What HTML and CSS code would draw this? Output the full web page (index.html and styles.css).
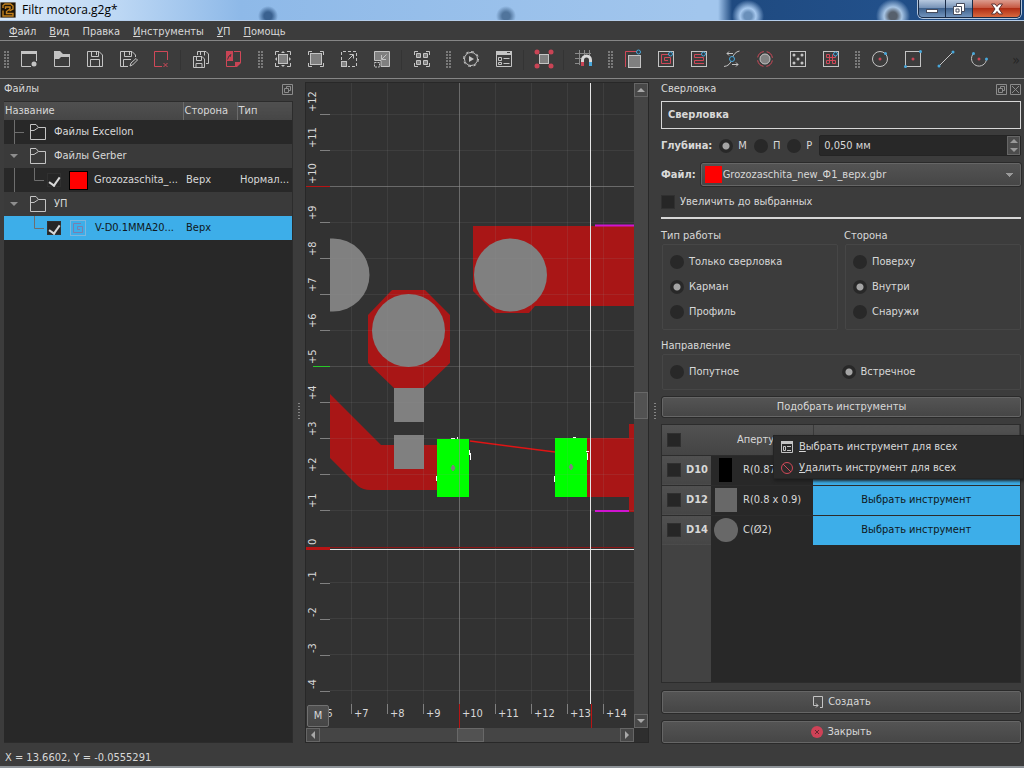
FILE: index.html
```html
<!DOCTYPE html>
<html lang="ru">
<head>
    <meta charset="UTF-8">
    <meta name="viewport" content="width=device-width, initial-scale=1.0">
    <title>Filtr motora.g2g*</title>
    <link rel="stylesheet" href="styles.css">
</head>
<body>
    <header class="titlebar">
        <svg class="app-icon" width="16" height="16" viewBox="0 0 16 16">
            <rect width="16" height="16" fill="#1d1408"/>
            <path d="M3 6V3.500L5 2H10.500L13 4V7L9.500 9M3 8.500V14H13V11.500H6.500V9.500L10 7V5H5.500V7" fill="none" stroke="#c4811c" stroke-width="1.400"/>
        </svg>
        <h1>Filtr motora.g2g*</h1>
        <div class="window-buttons">
            <button aria-label="Свернуть"><svg width="14" height="12" viewBox="0 0 14 12"><rect x="1.500" y="6.500" width="11" height="3" fill="#fff" stroke="#454b5c"/></svg></button>
            <button aria-label="Развернуть"><svg width="14" height="12" viewBox="0 0 14 12"><path d="M4.500 .5H12.500V8.500H9.500V11.500H1.500V3.500H4.500Z" fill="#fff" stroke="#454b5c"/><path d="M4.500 3.500H9.500V8.500M4 6H7V9H4Z" fill="none" stroke="#454b5c"/></svg></button>
            <button class="close" aria-label="Закрыть окно"><svg width="14" height="12" viewBox="0 0 14 12"><path d="M1.500 1H5L7 3.500 9 1H12.500L9 6 12.500 11H9L7 8.500 5 11H1.500L5 6Z" fill="#fff" stroke="#5b3030"/></svg></button>
        </div>
    </header>

    <nav class="menubar">
        <a href="#"><u>Ф</u>айл</a>
        <a href="#"><u>В</u>ид</a>
        <a href="#">Правка</a>
        <a href="#"><u>И</u>нструменты</a>
        <a href="#"><u>У</u>П</a>
        <a href="#"><u>П</u>омощь</a>
    </nav>

    <div class="toolbar">
        <div class="tool-group">
            <span class="handle"></span>
            <button aria-label="Новый"><svg viewBox="-3 -2 21 21"><path class="fill" d="M0 0H16V3H0Z"/><path d="M.5 2V15.500H10M15.500 2V10"/><circle class="fill" cx="13" cy="13" r="2.500"/></svg></button>
            <button aria-label="Открыть"><svg viewBox="-3 -2 21 21"><path class="fill" d="M0 0H6L9 3H16V6H7L5 8H0Z"/><path d="M.5 3V15.500H15.500V4"/></svg></button>
            <button aria-label="Сохранить"><svg viewBox="-3 -2 21 21"><path d="M.5 .5H12L15.500 4V15.500H.5ZM4.500 .5V5.500H11.500V.5M9.500 1V4M3.500 15V8.500H12.500V15"/></svg></button>
            <button aria-label="Сохранить как"><svg viewBox="-3 -2 21 21"><path d="M8 15.500H.5V.5H12L15.500 4V6M4.500 .5V5.500H11.500V.5M9.500 1V4M3.500 15V8.500H11M10 15L11 12 16 7.500 17.500 9 12.500 14Z"/></svg></button>
            <button aria-label="Закрыть файл"><svg viewBox="-3 -2 21 21"><path class="red" d="M9 15.500H1.500V.5H14.500V9M10.500 12L14.500 16M14.500 12L10.500 16"/></svg></button>
            <span class="sep"></span>
            <button aria-label="Сохранить все"><svg viewBox="-3 -2 21 21"><path d="M.5 5.500H9L11.500 8V16.500H.5ZM3.500 5.500V9.500H8.500V5.500M3 16V12.500H9V16M4.500 4V.5H13L15.500 3V12.500H13M7.500 1V4M11.500 1V4.500"/></svg></button>
            <button aria-label="Экспорт PDF"><svg viewBox="-3 -2 21 21"><path class="red" d="M8 .5H14.500V11M.5 10V15.500H9"/><path class="redfill" d="M0 0H7V10H0ZM15 11V12L11 16H9V11Z"/><path d="M1.500 8.500L3 5 5 3.500 4 6" stroke="#3c3c3c"/></svg></button>
        </div>
        <div class="tool-group">
            <span class="handle"></span>
            <button aria-label="Вписать"><svg viewBox="-3 -2 21 21"><path d="M.5 4V.5H4M12 .5H15.500V4M15.500 12V15.500H12M4 15.500H.5V12"/><rect class="box" x="3.500" y="3.500" width="9" height="9"/><path class="fill" d="M8 0L10 2H6ZM8 16L6 14H10ZM0 8L2 6V10ZM16 8L14 10V6Z"/></svg></button>
            <button aria-label="Масштаб 100%"><svg viewBox="-3 -2 21 21"><path d="M.5 4V.5H4M12 .5H15.500V4M15.500 12V15.500H12M4 15.500H.5V12"/><rect class="box" x="2.500" y="2.500" width="11" height="11"/></svg></button>
            <button aria-label="Увеличить"><svg viewBox="-3 -2 21 21"><path d="M.5 9V.5H15.500V15.500H7" stroke-dasharray="3 2"/><rect class="box" x=".5" y="10.500" width="5" height="5"/><path d="M7.500 8.500L12 4M8.500 3.500H12.500V7.500"/></svg></button>
            <button aria-label="Уменьшить"><svg viewBox="-3 -2 21 21"><path class="box" d="M.5 .5H15.500V15.500H7V9.500H.5Z"/><path d="M12.500 3.500L8 8M7.500 4V8.500H12"/><path d="M.5 11.500H5.500V16H.5Z" stroke-dasharray="2 1"/></svg></button>
            <span class="sep"></span>
            <button aria-label="Выбрать всё"><svg viewBox="-3 -2 21 21"><path d="M.5 4V.5H4M12 .5H15.500V4M15.500 12V15.500H12M4 15.500H.5V12"/><path class="box" d="M2.500 2.500H6.500V6.500H2.500ZM9.500 2.500H13.500V6.500H9.500ZM2.500 9.500H6.500V13.500H2.500ZM9.500 9.500H13.500V13.500H9.500Z"/></svg></button>
        </div>
        <div class="tool-group">
            <span class="handle"></span>
            <button aria-label="Запуск"><svg viewBox="-3 -2 21 21"><circle cx="8" cy="8" r="6.500"/><circle cx="8" cy="8" r="7.500" stroke-dasharray="3 2.890"/><path class="fill" d="M6 5L11 8 6 11Z"/></svg></button>
            <button aria-label="База инструментов"><svg viewBox="-3 -2 21 21"><path d="M.5 .5H15.500V15.500H.5ZM2.500 6.500H5.500V9.500H2.500ZM2.500 11.500H5.500V13.500H2.500ZM7.500 7.500H13.500M7.500 12.500H13.500"/><path class="fill" d="M0 0H16V4H0Z"/><path d="M11 1.500H14" stroke="#3c3c3c"/></svg></button>
            <span class="sep"></span>
            <button aria-label="Метки"><svg viewBox="-3 -2 21 21"><path class="red" d="M1 1L15 15M15 1L1 15"/><rect class="box" x="3.500" y="3.500" width="9" height="9"/><g class="redfill"><circle cx="1" cy="1" r="2.500"/><circle cx="15" cy="1" r="2.500"/><circle cx="1" cy="15" r="2.500"/><circle cx="15" cy="15" r="2.500"/></g></svg></button>
            <span class="sep"></span>
            <button aria-label="Привязка"><svg viewBox="-3 -2 21 21"><path d="M3.500 -1V14M8.500 -1V5M13.500 -1V5M-1 2.500H15M-1 7.500H6M-1 12.500H4" stroke="#8a8a8a"/><path d="M6.500 12V9A4 4 0 0 1 14.500 9V12" stroke="#d8d8d8" stroke-width="3"/><path class="redfill" d="M5 11H8V15H5Z"/><path d="M13 11H16V15H13Z" fill="#48a8dc" stroke="none"/></svg></button>
        </div>
        <div class="tool-group">
            <span class="handle"></span>
            <button aria-label="Профиль"><svg viewBox="-3 -2 21 21"><path class="red" d="M.5 16V.5H13"/><rect class="box" x="3.500" y="4.500" width="12" height="12"/><circle class="blue" cx="13.500" cy="1" r="2"/></svg></button>
            <button aria-label="Карман"><svg viewBox="-3 -2 21 21"><rect x=".5" y=".5" width="15" height="15"/><path class="red" d="M12 3.500H3.500V12.500H12.500V6.500H6.500V9.500H10"/><circle class="blue" cx="12.500" cy="3" r="2"/></svg></button>
            <button aria-label="Растр"><svg viewBox="-3 -2 21 21"><rect x=".5" y=".5" width="15" height="15"/><path class="red" d="M11 3.500H3.500V6.500H12.500V9.500H3.500V12.500H13"/><circle class="blue" cx="12.500" cy="3" r="2"/></svg></button>
            <button aria-label="Гравировка"><svg viewBox="-3 -2 21 21"><path d="M0 15.500Q6 15 8 8T15.500 0M3 2.500H9M5 .5L3 2.500 5 4.500M8 13.500H14M12 11.500L14 13.500 12 15.500"/><circle class="blue" cx="8" cy="8" r="2.500"/></svg></button>
            <button aria-label="Сверловка"><svg viewBox="-3 -2 21 21"><circle class="box" cx="8" cy="8" r="5"/><circle class="red" cx="8" cy="8" r="7.500" stroke-dasharray="8.780 3" stroke-dashoffset="-1.500"/></svg></button>
            <button aria-label="Отверстия"><svg viewBox="-3 -2 21 21"><rect x=".5" y=".5" width="15" height="15"/><g class="fill"><circle cx="4" cy="4" r="1.500"/><circle cx="12" cy="4" r="1.500"/><circle cx="8" cy="8" r="1.500"/><circle cx="4" cy="12" r="1.500"/><circle cx="12" cy="12" r="1.500"/></g></svg></button>
            <button aria-label="Перекрестия"><svg viewBox="-3 -2 21 21"><rect x=".5" y=".5" width="15" height="15"/><path class="red" d="M6.500 3.500H3.500V6.500H12.500V3.500H9.500V12.500H12.500V9.500H3.500V12.500H6.500Z"/><circle class="blue" cx="12.500" cy="3" r="2"/></svg></button>
        </div>
        <div class="tool-group">
            <span class="handle"></span>
            <button aria-label="Окружность"><svg viewBox="-3 -2 21 21"><circle cx="8" cy="8" r="7.500"/><circle class="redfill" cx="8" cy="8" r="1.500"/><circle class="bluefill" cx="13.500" cy="2.500" r="1.500"/></svg></button>
            <button aria-label="Прямоугольник"><svg viewBox="-3 -2 21 21"><rect x=".5" y=".5" width="15" height="15"/><circle class="redfill" cx="8" cy="8" r="1.500"/><circle class="bluefill" cx="15.500" cy=".5" r="1.500"/><circle class="bluefill" cx=".5" cy="15.500" r="1.500"/></svg></button>
            <button aria-label="Линия"><svg viewBox="-3 -2 21 21"><path d="M1 15L15 1"/><circle class="bluefill" cx="15" cy="1" r="1.500"/><circle class="bluefill" cx="1" cy="15" r="1.500"/></svg></button>
            <button aria-label="Дуга"><svg viewBox="-3 -2 21 21"><path d="M2.500 2.500A7.500 7.500 0 1 0 15.500 8"/><circle class="redfill" cx="8" cy="8" r="1.500"/><circle class="bluefill" cx="2.500" cy="2.500" r="1.500"/><circle class="bluefill" cx="15.500" cy="8" r="1.500"/></svg></button>
        </div>
        <button class="more" aria-label="Ещё">»</button>
    </div>

    <main class="workspace">
        <section class="dock files">
            <div class="dock-title">
                <h2>Файлы</h2>
                <button aria-label="Открепить"><svg viewBox="0 0 11 11"><path d="M.5 .5H10.500V10.500H.5ZM4.500 4.500V2.500H8.500V6.500H6.500M2.500 4.500H6.500V8.500H2.500Z"/></svg></button>
            </div>
            <div class="tree">
                <table>
                    <colgroup><col><col class="col-side"><col class="col-type"></colgroup>
                    <thead><tr><th>Название</th><th>Сторона</th><th>Тип</th></tr></thead>
                    <tbody>
                        <tr>
                            <td><div class="node">
                                <svg class="branch" viewBox="0 0 20 24"><path d="M10.500 0V24M11 12.500H20"/></svg>
                                <svg class="folder" viewBox="0 0 16 16"><path d="M.5 15.500V.5H6L8.500 3.500H15.500V15.500ZM.5 6.500H4L8.500 3.500"/></svg>
                                <span>Файлы Excellon</span></div></td>
                            <td></td><td></td>
                        </tr>
                        <tr class="alt">
                            <td><div class="node">
                                <svg class="branch" viewBox="0 0 20 24"><path class="arrow" d="M6 10H14L10 14Z"/></svg>
                                <svg class="folder" viewBox="0 0 16 16"><path d="M.5 15.500V.5H6L8.500 3.500H15.500V15.500ZM.5 6.500H4L8.500 3.500"/></svg>
                                <span>Файлы Gerber</span></div></td>
                            <td></td><td></td>
                        </tr>
                        <tr>
                            <td><div class="node">
                                <svg class="branch" viewBox="0 0 20 24"><path d="M10.500 0V24"/></svg>
                                <svg class="branch" viewBox="0 0 20 24"><path d="M10.500 0V12.500H20"/></svg>
                                <input type="checkbox" checked aria-label="Показать Grozozaschita">
                                <i class="swatch"></i>
                                <span>Grozozaschita_...</span></div></td>
                            <td>Верх</td><td>Нормал...</td>
                        </tr>
                        <tr class="alt">
                            <td><div class="node">
                                <svg class="branch" viewBox="0 0 20 24"><path class="arrow" d="M6 10H14L10 14Z"/></svg>
                                <svg class="folder" viewBox="0 0 16 16"><path d="M.5 15.500V.5H6L8.500 3.500H15.500V15.500ZM.5 6.500H4L8.500 3.500"/></svg>
                                <span>УП</span></div></td>
                            <td></td><td></td>
                        </tr>
                        <tr class="selected">
                            <td><div class="node">
                                <svg class="branch" viewBox="0 0 20 24"></svg>
                                <svg class="branch" viewBox="0 0 20 24"><path d="M10.500 0V12.500H20"/></svg>
                                <input type="checkbox" checked aria-label="Показать V-D0.1MMA20">
                                <svg class="pocket" viewBox="0 0 18 18"><rect x="1.500" y="1.500" width="15" height="15"/><path d="M12 4.500H4.500V13.500H13.500V7.500H8.500V10.500H11"/></svg>
                                <span>V-D0.1MMA20...</span></div></td>
                            <td>Верх</td><td></td>
                        </tr>
                    </tbody>
                </table>
            </div>
        </section>

        <div class="splitter"></div>

        <section class="view">
            <!-- board view, coordinates are in window pixels -->
            <svg class="canvas" viewBox="306 83 328 645" preserveAspectRatio="xMinYMin slice">
                <defs><clipPath id="plot"><rect x="330" y="83" width="1400" height="621"/></clipPath></defs>
                <rect x="306" y="83" width="1400" height="1400" fill="#323232"/>
                <g clip-path="url(#plot)">
                    <g fill="#a91616">
                        <path d="M473 226H634V306H535L529 313H495L473 291Z"/>
                        <path d="M392 290H425L450 315V363L424 388H394L368 363V315Z"/>
                        <path d="M330 394L381 445H437V490H370Q363 490 358 486L330 458Z"/>
                        <path d="M587 438H629V424H634V512H629V497H587Z"/>
                    </g>
                    <g fill="#808080">
                        <circle cx="333" cy="275" r="36.500"/>
                        <circle cx="510.500" cy="275" r="36.500"/>
                        <circle cx="408.500" cy="330.500" r="36.500"/>
                        <path d="M394 388H424V422H394ZM394 435H424V469H394Z"/>
                    </g>
                    <path d="M470 441L555 452" stroke="#e01414" stroke-width="1.500"/>
                    <path d="M437 439H469V497H437ZM555 438H587V497H555Z" fill="#0f0"/>
                    <path d="M453 465L455 468 453 471 451 468ZM571 464L573 467 571 470 569 467Z" fill="#808080" stroke="#808080"/>
                    <path d="M451 438.500H455M457.500 437V439M469.500 450V455M470.500 453V460M436.500 476V481M554.500 476V482M573 437.500H576M586 451.500H589M587.500 453V460" stroke="#fff"/>
                    <path class="grid" d="M351.500 83V704M387.500 83V704M423.500 83V704M495.500 83V704M531.500 83V704M567.500 83V704M603.500 83V704M330 114.500H634M330 150.500H634M330 222.500H634M330 258.500H634M330 294.500H634M330 330.500H634M330 402.500H634M330 438.500H634M330 474.500H634M330 510.500H634M330 582.500H634M330 618.500H634M330 654.500H634M330 690.500H634"/>
                    <path class="grid middle" d="M330 366.500H634"/>
                    <path class="grid major" d="M459.500 83V704M330 186.500H634"/>
                    <path d="M595 225.500H634M595 511H629" stroke="#d014d0" stroke-width="2"/>
                    <rect x="330" y="547" width="304" height="1" fill="#8c1515"/>
                    <path d="M590.500 83V704M330 549.500H634" stroke="#e4e4e4"/>
                </g>
                <path d="M320 114.500H330M320 150.500H330M320 222.500H330M320 258.500H330M320 294.500H330M320 330.500H330M320 402.500H330M320 438.500H330M320 474.500H330M320 510.500H330M320 583.500H330M320 619.500H330M320 655.500H330M320 691.500H330M351.500 704V714M387.500 704V714M423.500 704V714M495.500 704V714M531.500 704V714M567.500 704V714M603.500 704V714" stroke="#808080"/>
                <path d="M306 186H330V187H306ZM306 547H330V550H306ZM459 704H460V728H459ZM591 704H592V728H591Z" fill="#b81414"/>
                <path d="M313 366.500H330" stroke="#28c828"/>
                <g class="ruler">
                    <text transform="translate(316 112) rotate(-90)">+12</text>
                    <text transform="translate(316 148) rotate(-90)">+11</text>
                    <text transform="translate(316 184) rotate(-90)">+10</text>
                    <text transform="translate(316 220) rotate(-90)">+9</text>
                    <text transform="translate(316 256) rotate(-90)">+8</text>
                    <text transform="translate(316 292) rotate(-90)">+7</text>
                    <text transform="translate(316 328) rotate(-90)">+6</text>
                    <text transform="translate(316 364) rotate(-90)">+5</text>
                    <text transform="translate(316 400) rotate(-90)">+4</text>
                    <text transform="translate(316 436) rotate(-90)">+3</text>
                    <text transform="translate(316 472) rotate(-90)">+2</text>
                    <text transform="translate(316 508) rotate(-90)">+1</text>
                    <text transform="translate(316 545) rotate(-90)">0</text>
                    <text transform="translate(316 581) rotate(-90)">-1</text>
                    <text transform="translate(316 617) rotate(-90)">-2</text>
                    <text transform="translate(316 653) rotate(-90)">-3</text>
                    <text transform="translate(316 689) rotate(-90)">-4</text>
                    <text x="318" y="717">+6</text>
                    <text x="354" y="717">+7</text>
                    <text x="390" y="717">+8</text>
                    <text x="426" y="717">+9</text>
                    <text x="462" y="717">+10</text>
                    <text x="498" y="717">+11</text>
                    <text x="534" y="717">+12</text>
                    <text x="570" y="717">+13</text>
                    <text x="606" y="717">+14</text>
                </g>
            </svg>
            <button class="unit">M</button>
            <div class="scroll vertical">
                <button aria-label="Вверх"><svg viewBox="0 0 8 8"><path d="M0 6L4 2 8 6Z"/></svg></button>
                <div class="track"><i class="thumb"></i></div>
                <button aria-label="Вниз"><svg viewBox="0 0 8 8"><path d="M0 2L4 6 8 2Z"/></svg></button>
            </div>
            <div class="scroll horizontal">
                <button aria-label="Влево"><svg viewBox="0 0 8 8"><path d="M6 0L2 4 6 8Z"/></svg></button>
                <div class="track"><i class="thumb"></i></div>
                <button aria-label="Вправо"><svg viewBox="0 0 8 8"><path d="M2 0L6 4 2 8Z"/></svg></button>
            </div>
        </section>

        <div class="splitter"></div>

        <section class="dock drill">
            <div class="dock-title">
                <h2>Сверловка</h2>
                <button aria-label="Открепить"><svg viewBox="0 0 11 11"><path d="M.5 .5H10.500V10.500H.5ZM4.500 4.500V2.500H8.500V6.500H6.500M2.500 4.500H6.500V8.500H2.500Z"/></svg></button>
                <button aria-label="Закрыть панель"><svg viewBox="0 0 11 11"><path d="M.5 .5H10.500V10.500H.5ZM2 2L9 9M9 2L2 9"/></svg></button>
            </div>
            <h3 class="form-title">Сверловка</h3>

            <div class="depth">
                <label class="name" for="depth">Глубина:</label>
                <label><input type="radio" name="depth-mode" checked>М</label>
                <label><input type="radio" name="depth-mode">П</label>
                <label><input type="radio" name="depth-mode">Р</label>
                <div class="spin">
                    <input type="text" id="depth" value="0,050 мм">
                    <div class="steps">
                        <button aria-label="Больше"><svg viewBox="0 0 8 4"><path d="M0 4L4 0 8 4Z"/></svg></button>
                        <button aria-label="Меньше"><svg viewBox="0 0 8 4"><path d="M0 0L4 4 8 0Z"/></svg></button>
                    </div>
                </div>
            </div>
            <div class="file">
                <label class="name" for="file">Файл:</label>
                <select id="file"><option>Grozozaschita_new_Ф1_верх.gbr</option></select>
            </div>
            <label class="zoom"><input type="checkbox">Увеличить до выбранных</label>
            <hr>

            <div class="groups">
                <fieldset>
                    <legend>Тип работы</legend>
                    <div class="options">
                        <label><input type="radio" name="work">Только сверловка</label>
                        <label><input type="radio" name="work" checked>Карман</label>
                        <label><input type="radio" name="work">Профиль</label>
                    </div>
                </fieldset>
                <fieldset>
                    <legend>Сторона</legend>
                    <div class="options">
                        <label><input type="radio" name="side">Поверху</label>
                        <label><input type="radio" name="side" checked>Внутри</label>
                        <label><input type="radio" name="side">Снаружи</label>
                    </div>
                </fieldset>
                <fieldset class="wide">
                    <legend>Направление</legend>
                    <div class="options">
                        <label><input type="radio" name="dir">Попутное</label>
                        <label><input type="radio" name="dir" checked>Встречное</label>
                    </div>
                </fieldset>
            </div>

            <button class="btn pick">Подобрать инструменты</button>

            <div class="apertures">
                <table>
                    <colgroup><col class="col-code"><col class="col-aperture"><col></colgroup>
                    <thead>
                        <tr><th><input type="checkbox" aria-label="Выбрать все"></th><th>Апертура</th><th></th></tr>
                    </thead>
                    <tbody>
                        <tr>
                            <th><label><input type="checkbox">D10</label></th>
                            <td><div class="shape"><svg viewBox="0 0 24 24"><path d="M5 0H18V24H5Z" fill="#000"/></svg>R(0.875 x 1.6)</div></td>
                            <td class="tool"></td>
                        </tr>
                        <tr>
                            <th><label><input type="checkbox">D12</label></th>
                            <td><div class="shape"><svg viewBox="0 0 24 24"><path d="M1 0H23V24H1Z" fill="#686868"/></svg>R(0.8 x 0.9)</div></td>
                            <td class="tool">Выбрать инструмент</td>
                        </tr>
                        <tr>
                            <th><label><input type="checkbox">D14</label></th>
                            <td><div class="shape"><svg viewBox="0 0 24 24"><circle cx="12" cy="12" r="12" fill="#686868"/></svg>C(Ø2)</div></td>
                            <td class="tool">Выбрать инструмент</td>
                        </tr>
                    </tbody>
                </table>
                <div class="context-menu">
                    <button><svg viewBox="0 0 12 12"><path d="M.5 .5H11.500V11.500H.5ZM2.500 5.500H4.500V9.500H2.500ZM6 5.500H10M6 9.500H10" /><path class="fill" d="M0 0H12V3H0Z"/></svg><span><u>В</u>ыбрать инструмент для всех</span></button>
                    <button><svg viewBox="0 0 12 12"><circle class="red" cx="6" cy="6" r="5.500"/><path class="red" d="M2 2L10 10"/></svg><span><u>У</u>далить инструмент для всех</span></button>
                </div>
            </div>

            <button class="btn big"><svg viewBox="0 0 12 12"><path d="M1.500 6V.5H10.500V11.500H8M1.500 6V9.500H6M4 7.500L6 9.500 4 11.500"/></svg>Создать</button>
            <button class="btn big"><svg viewBox="0 0 12 12"><circle cx="6" cy="6" r="6" fill="#cf4257" stroke="none"/><path d="M4 4L8 8M8 4L4 8" stroke="#6b2530"/></svg>Закрыть</button>
        </section>
    </main>

    <footer class="statusbar">X = 13.6602, Y = -0.0555291</footer>
</body>
</html>
```
FILE: styles.css
```css
* {
    box-sizing: border-box;
}

body {
    margin: 0;
    height: 100vh;
    display: flex;
    flex-direction: column;
    overflow: hidden;
    background: #3c3c3c;
    color: #d8d8d8;
    font: 11px/14px "DejaVu Sans Condensed", "Noto Sans", sans-serif;
}

h1, h2, h3 {
    margin: 0;
    font-size: 11px;
    font-weight: normal;
}

button, input, select {
    font: inherit;
    color: inherit;
    margin: 0;
    padding: 0;
    border: none;
    background: none;
}

svg {
    display: block;
    fill: none;
    stroke: #c4c4c4;
    flex: none;
}

svg text {
    stroke: none;
}

/* window title */
.titlebar {
    flex: none;
    height: 21px;
    display: flex;
    align-items: center;
    gap: 6px;
    border-bottom: 1px solid #b4cdea;
    background:
        radial-gradient(circle at 748px 16px, #6a90ba 4px, #a6c8ee 8px, transparent 16px),
        radial-gradient(circle at 893px 16px, #56606c 4px, #a6c4e4 9px, transparent 17px),
        radial-gradient(circle at 268px 16px, #3a6190 4px, transparent 10px),
        radial-gradient(circle at 506px 16px, #50749c 4px, transparent 10px),
        linear-gradient(90deg, #dbe9f8 0, #bcd7f4 120px, #8eb9e8 240px, #a2c6ed 700px, #a2c6ed 718px, #1f4a80 732px, #22508a 880px, #1b467c 100%);
}

.titlebar h1 {
    flex: 1;
    color: #000;
    font: 12px/18px "Open Sans", sans-serif;
}

.window-buttons {
    align-self: flex-start;
    display: flex;
    height: 18px;
    margin-right: 3px;
    border: 1px solid #1a2c47;
    border-top: none;
    border-radius: 0 0 5px 5px;
    box-shadow: 0 0 0 1px #b3c5db;
    overflow: hidden;
}

.window-buttons button {
    width: 27px;
    display: flex;
    justify-content: center;
    align-items: center;
    background: linear-gradient(#b7c9df, #7894b8 45%, #3f628d 50%, #7294bd);
    border-right: 1px solid #1a2c47;
}

.window-buttons svg {
    stroke: none;
}

.window-buttons .close {
    width: 47px;
    border: none;
    background: linear-gradient(#dc9c8e, #c75a43 45%, #b02e15 50%, #d8693f);
}

/* menu */
.menubar {
    flex: none;
    display: flex;
    gap: 13px;
    height: 20px;
    padding: 4px 9px 0;
    border-bottom: 1px solid #868686;
}

.menubar a {
    color: inherit;
    text-decoration: none;
}

/* tool bar */
.toolbar {
    flex: none;
    display: flex;
    gap: 4px;
    height: 38px;
    border-bottom: 1px solid #868686;
}

.tool-group {
    display: flex;
    align-items: center;
}

.tool-group button {
    width: 33px;
    height: 37px;
    display: flex;
    justify-content: center;
    align-items: center;
}

.tool-group svg {
    width: 21px;
    height: 21px;
    overflow: visible;
}

.handle {
    width: 12px;
    height: 18px;
    background: radial-gradient(circle at 1px 1px, #7a7a7a 1px, transparent 1px) 4px 0 / 3px 3px repeat-y,
        radial-gradient(circle at 1px 1px, #7a7a7a 1px, transparent 1px) 7px 0 / 3px 3px repeat-y;
}

.sep {
    width: 1px;
    height: 20px;
    margin: 0 3px;
    background: #343434;
}

.more {
    margin: 0 4px 0 auto;
    color: #252525;
    font-size: 14px;
}

.fill {
    fill: #c4c4c4;
    stroke: none;
}

.box {
    fill: #808080;
}

.red {
    stroke: #d04858;
}

.redfill {
    fill: #c94455;
    stroke: none;
}

.blue {
    fill: #303c44;
    stroke: #48a8dc;
}

.bluefill {
    fill: #48a8dc;
    stroke: none;
}

/* work area */
.workspace {
    flex: 1;
    min-height: 0;
    display: flex;
}

.splitter {
    flex: none;
    width: 12px;
    display: flex;
    align-items: center;
    justify-content: center;
}

.splitter::before {
    content: "";
    width: 2px;
    height: 18px;
    background: repeating-linear-gradient(#858585 0 1px, transparent 1px 3px);
}

.dock {
    flex: none;
    display: flex;
    flex-direction: column;
    padding-bottom: 1px;
}

.files {
    width: 293px;
    padding-left: 4px;
}

.dock-title {
    flex: none;
    display: flex;
    align-items: center;
    gap: 3px;
    height: 22px;
    padding-bottom: 2px;
}

.dock-title h2 {
    flex: 1;
}

.dock-title svg {
    width: 11px;
    height: 11px;
    stroke: #8c8c8c;
}

table {
    width: 100%;
    table-layout: fixed;
    border-collapse: collapse;
}

td, th {
    padding: 0;
    text-align: left;
    font-weight: normal;
    white-space: nowrap;
}

.tree {
    flex: 1;
    background: #282828;
    border: 1px solid #2c2c2c;
    border-left: none;
}

.tree th {
    height: 18px;
    padding-left: 1px;
    background: linear-gradient(#505050, #464646);
    border-right: 1px solid #6a6a6a;
}

.tree th:last-child {
    border: none;
}

.col-side {
    width: 54px;
}

.col-type {
    width: 55px;
}

.tree td {
    height: 24px;
    padding-left: 3px;
}

.tree td:first-child {
    padding-left: 0;
}

.tree .alt {
    background: #3a3a3a;
}

.tree .selected {
    background: #3daee9;
    color: #101820;
}

.node {
    display: flex;
    align-items: center;
    height: 24px;
}

.branch {
    width: 20px;
    height: 24px;
    stroke: #6e6e6e;
}

.branch .arrow {
    fill: #8e8e8e;
    stroke: none;
}

.folder {
    width: 16px;
    height: 16px;
    margin: 0 8px 0 6px;
}

.node input {
    margin: 0 8px 0 3px;
}

.swatch {
    width: 19px;
    height: 19px;
    margin-right: 6px;
    background: #f00;
    border: 1px solid #000;
}

.pocket {
    width: 18px;
    height: 18px;
    margin-right: 8px;
    stroke: #7fb6dc;
}

.pocket path {
    stroke: #7a7fae;
}

/* check boxes and radios */
input[type="checkbox"] {
    appearance: none;
    flex: none;
    display: grid;
    place-items: center;
    width: 14px;
    height: 14px;
    background: #262626;
    border: 1px solid #303030;
}

input[type="checkbox"]:checked::before {
    content: "";
    width: 5px;
    height: 9px;
    border: solid #d8d8d8;
    border-width: 0 2px 2px 0;
    transform: rotate(35deg);
}

input[type="radio"] {
    appearance: none;
    flex: none;
    width: 14px;
    height: 14px;
    border-radius: 50%;
    background: #282828;
}

input[type="radio"]:checked {
    background: radial-gradient(circle, #a4a4a4 3px, #282828 4px);
}

/* board view */
.view {
    flex: 1;
    min-width: 0;
    margin: 3px 0 1px;
    display: grid;
    grid-template-columns: 1fr 14px;
    grid-template-rows: 1fr 14px;
    border: 1px solid #282828;
    background: #2e2e2e;
}

.canvas {
    grid-area: 1 / 1;
    width: 100%;
    height: 100%;
    min-height: 0;
    stroke: none;
}

.grid {
    stroke: #909090;
    stroke-opacity: 0.13;
}

.grid.middle {
    stroke-opacity: 0.3;
}

.grid.major {
    stroke-opacity: 0.6;
}

.ruler {
    fill: #d8d8d8;
}

.unit {
    grid-area: 1 / 1;
    place-self: end start;
    width: 22px;
    height: 22px;
    margin: 1px;
    border: 1px solid #707070;
    border-radius: 2px;
    background: linear-gradient(#505050, #464646);
}

.scroll {
    display: flex;
    background: #454545;
}

.vertical {
    grid-area: 1 / 2;
    flex-direction: column;
}

.horizontal {
    grid-area: 2 / 1;
}

.scroll button {
    flex: none;
    width: 14px;
    height: 14px;
    display: flex;
    align-items: center;
    justify-content: center;
    border: 1px solid #666;
    background: #484848;
}

.scroll svg {
    width: 8px;
    height: 8px;
    fill: #a8a8a8;
    stroke: none;
}

.track {
    flex: 1;
    display: flex;
    align-items: center;
    justify-content: center;
}

.thumb {
    width: 14px;
    height: 27px;
    border: 1px solid #686868;
    background: #525252;
}

.horizontal .thumb {
    width: 27px;
    height: 14px;
}

/* drill form */
.drill {
    width: 363px;
    padding-right: 3px;
}

.drill label {
    display: flex;
    align-items: center;
    gap: 5px;
}

.form-title {
    height: 28px;
    padding: 0 6px;
    border: 1px solid #d8d8d8;
    font-weight: bold;
    line-height: 26px;
}

.depth {
    display: flex;
    align-items: center;
    gap: 7px;
    margin-top: 6px;
}

.drill .name {
    font-weight: bold;
}

.spin {
    flex: 1;
    display: flex;
    height: 21px;
    background: #282828;
    border: 1px solid #242424;
    border-radius: 2px;
}

.spin input {
    flex: 1;
    min-width: 0;
    padding: 0 4px;
}

.steps {
    display: flex;
    flex-direction: column;
    width: 13px;
    border: 1px solid #666;
    background: #4c4c4c;
}

.steps button {
    flex: 1;
    display: flex;
    align-items: center;
    justify-content: center;
}

.steps svg {
    width: 8px;
    height: 4px;
    fill: #999;
    stroke: none;
}

.file {
    display: flex;
    gap: 5px;
    margin-top: 7px;
}

.file select {
    appearance: none;
    flex: 1;
    height: 23px;
    padding-left: 21px;
    border: 1px solid #666;
    border-radius: 2px;
    outline: 1px solid #2a2a2a;
    background:
        linear-gradient(#f00, #f00) 3px 2px / 17px 17px no-repeat,
        linear-gradient(to bottom left, #999 50%, transparent 50%) right 10px center / 4px 4px no-repeat,
        linear-gradient(to bottom right, #999 50%, transparent 50%) right 6px center / 4px 4px no-repeat,
        linear-gradient(#535353, #464646);
}

.drill .zoom {
    margin-top: 9px;
}

.drill hr {
    width: 100%;
    margin: 8px 0 9px;
    border: none;
    border-top: 2px solid #d8d8d8;
}

.groups {
    display: grid;
    grid-template-columns: 1fr 1fr;
    gap: 8px 6px;
}

fieldset {
    min-width: 0;
    margin: 0;
    padding: 0;
    border: none;
}

.wide {
    grid-column: 1 / 3;
}

legend {
    padding: 0;
    line-height: 16px;
}

.options {
    display: flex;
    flex-direction: column;
    gap: 11px;
    margin-left: 1px;
    padding: 10px 7px;
    border: 1px solid #464646;
    border-radius: 2px;
}

.wide .options {
    flex-direction: row;
    gap: 0;
}

.wide label {
    flex: 1;
}

.btn {
    flex: none;
    display: flex;
    align-items: center;
    justify-content: center;
    gap: 4px;
    margin-left: 1px;
    border: 1px solid #666;
    border-radius: 2px;
    outline: 1px solid #2a2a2a;
    background: linear-gradient(#545454, #464646);
}

.btn svg {
    width: 12px;
    height: 12px;
}

.pick {
    height: 20px;
    margin: 7px 0 7px 1px;
}

.big {
    height: 22px;
    margin-top: 8px;
}

/* aperture table */
.apertures {
    flex: 1;
    position: relative;
    border: 1px solid #2c2c2c;
    background: linear-gradient(90deg, #424242 49px, #282828 49px);
}

.col-code {
    width: 49px;
}

.col-aperture {
    width: 102px;
}

.apertures thead th {
    height: 30px;
    text-align: center;
    background: linear-gradient(#525252, #444);
    border-right: 1px solid #3a3a3a;
}

.apertures thead th:first-child {
    text-align: left;
    padding-left: 5px;
    border: none;
}

.apertures tbody th {
    height: 30px;
    padding-left: 5px;
    font-weight: bold;
    background: linear-gradient(#505050, #464646);
    border-top: 1px solid #2c2c2c;
}

.apertures td {
    border-top: 1px solid #2c2c2c;
    background: #282828;
}

.shape {
    display: flex;
    align-items: center;
    gap: 5px;
    padding-left: 3px;
    overflow: hidden;
}

.shape svg {
    width: 24px;
    height: 24px;
    stroke: none;
}

.apertures .tool {
    text-align: center;
    background: #3daee9;
    color: #101820;
}

.context-menu {
    position: absolute;
    top: 10px;
    left: 111px;
    right: -4px;
    border: 1px solid #242424;
    background: #2a2a2a;
    box-shadow: 1px 2px 3px #1c1c1c;
}

.context-menu button {
    width: 100%;
    height: 21px;
    display: flex;
    align-items: center;
    gap: 6px;
    padding-left: 7px;
}

.context-menu svg {
    width: 12px;
    height: 12px;
}

.statusbar {
    flex: none;
    height: 24px;
    padding: 7px 5px 0;
    border-bottom: 2px solid #8f9499;
}
```
